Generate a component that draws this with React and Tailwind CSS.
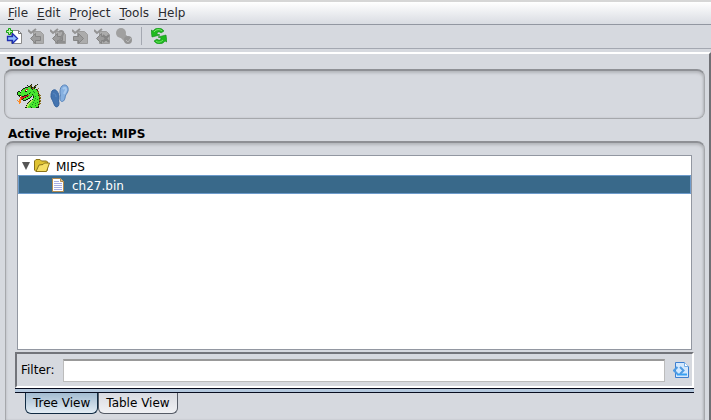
import { useState } from 'react';

const menus = ['File', 'Edit', 'Project', 'Tools', 'Help'];

const ImportIcon = () => (
  <svg width="16" height="16" viewBox="0 0 16 16">
    <path d="M5.5 2.5h7l3 3v10h-10z" fill="#fff" stroke="#8a8a8a" />
    <path d="M12.5 2.5v3h3" fill="none" stroke="#777" />
    <path d="M1.5 8.5h5v-3l5 5-5 5v-3h-5z" fill="#8fbcff" stroke="#1f2fb0" strokeWidth="1.3" />
    <path d="M2.5.5h2v2h2v2h-2v2h-2v-2h-2v-2h2z" fill="#c4f5b0" stroke="#12a012" />
  </svg>
);

const DisabledIcon = ({ kind }) => (
  <svg width="16" height="16" viewBox="0 0 16 16">
    <path d="M5.5 3.5h7l3 3v9h-10z" fill="#acacac" stroke="#9c9c9c" />
    {kind === 'out' ? (
      <path d="M1.5 8.5h5v-3l5 5-5 5v-3h-5z" fill="#9c9c9c" stroke="#858585" />
    ) : (
      <path d="M12.5 8.5h-5v-3l-5 5 5 5v-3h5z" fill="#9c9c9c" stroke="#858585" />
    )}
    {kind === 'undo' && <path d="M9 4c2-2 5-1 4 2L9 14h6" fill="none" stroke="#8e8e8e" strokeWidth="2" />}
    {kind === 'hijack' && <path d="M9 7l6 7M15 7l-6 7" fill="none" stroke="#858585" strokeWidth="2" />}
    <path d="M0 2l3 3 5-4" fill="none" stroke="#949494" strokeWidth="2" />
  </svg>
);

const FindIcon = () => (
  <svg width="16" height="16" viewBox="0 0 16 16">
    <circle cx="5" cy="5" r="5" fill="#a0a0a0" />
    <path d="M6 7l5 5" stroke="#a0a0a0" strokeWidth="6" />
    <circle cx="12" cy="12" r="4" fill="#949494" />
    <path d="M10 12l2 2 3-4" fill="none" stroke="#b8b8b8" />
  </svg>
);

const RefreshIcon = () => (
  <svg width="16" height="16" viewBox="0 0 16 16">
    <path d="M0 2l2 1c3-4 8-4 11 0l-3 2C8 3 6 4 6 6l3 1-8 2z" fill="#1fba1f" stroke="#118a18" strokeWidth=".6" />
    <path d="M16 14l-2-1c-3 4-8 4-11 0l3-2c2 2 4 1 4-1L7 9l8-2z" fill="#1fba1f" stroke="#118a18" strokeWidth=".6" />
    <path d="M3 4c2-3 6-3 8-1M5 13c2 2 5 1 7-1" fill="none" stroke="#7be86b" />
  </svg>
);

const dragonRows = [
  '..............K.....K...',
  '..........K..KB...KB....',
  '...........KKBK..KB.....',
  '........KKKGGBKKBKK.....',
  '......KKGGGGGGKBBK...B..',
  '.....KGGGRRGGGGKGGGKB...',
  '....KGGGRWGGGGGGGGGGK...',
  '.KK.GGGGKKGGGGGGDGGGBB..',
  'KGGKGGGGGGGGGDGGGDGGGB..',
  'KGGGGGGGGGGGKGGGGGGGGK..',
  'KGGGGGGGGGKGGGGKGGGGGBB.',
  '.KKKGGGKKKRRGGGGDGGGGKBB',
  '..KWRKKRRRKGGGK.KGDGGGB.',
  '...RRRRRKGGGGK..KGGGGGBB',
  '...ORRKGGGGKK...GGDGGGKB',
  '..OORKGGGKK....KGGGGDGB.',
  'O.OO..KKK....KLLGDGGGGBB',
  '.OOO........KLLGGGGGGGKB',
  '..OO.......KLLGGDGGGDGB.',
  '..O.......KLLGGGGGDGGGBB',
  '..........LLGGGDGGGGGKB.',
  '.........KLLGGGGGGDGGB..',
  '.........LLGGDGGGGGGGK..',
  '........KKLGGGKGGGGKKK..',
];
const dragonColors = { K: '#10240e', G: '#48e52f', D: '#168a20', L: '#b9e65c', B: '#856e1d', R: '#df2020', W: '#fff', O: '#ff861c' };

const DragonIcon = () => (
  <svg width="24" height="24" viewBox="0 0 24 24" shapeRendering="crispEdges">
    {dragonRows.map((row, y) =>
      [...row].map((c, x) => c !== '.' && <rect key={`${x}-${y}`} x={x} y={y} width="1" height="1" fill={dragonColors[c]} />)
    )}
  </svg>
);

const FootprintsIcon = () => (
  <svg width="20" height="24" viewBox="0 0 20 24">
    <path d="M2 7c3-3 6 0 7 5 0 3-1 4 0 7 0 5-4 5-5 1-1-3-2-4-3-7 0-2 0-4 1-6z" fill="#4474b0" stroke="#34639f" />
    <path d="M12 2c4-3 7 1 6 5-1 3-3 4-3 7-1 5-5 4-5 1 0-2 1-3 0-6 0-3 0-5 2-7z" fill="#86b0e0" stroke="#5985bb" />
    <path d="M13 5c2-2 3-1 3 1l-2 4" fill="none" stroke="#a7c8ed" strokeWidth="2" />
    <path d="M3 10c1-1 3 0 3 3" fill="none" stroke="#5d8bc4" />
  </svg>
);

const FolderIcon = () => (
  <svg width="17" height="16" viewBox="0 0 17 16">
    <path d="M.5 12V3L2 1.5h4L7.5 3h5l1 1v8L12 13.500H2z" fill="#dfc331" stroke="#8a7318" />
    <path d="M2 13.500L5 7l4-.5L10.500 5h5l-3 8.500z" fill="#f5df65" stroke="#8a7318" />
  </svg>
);

const FileIcon = () => (
  <svg width="12" height="14" viewBox="0 0 12 14">
    <path d="M.5.5h8l3 3v10H.5z" fill="#fff" stroke="#b58a4d" />
    <path d="M8.500.5v3h3" fill="#e8c994" stroke="#b58a4d" />
    <path d="M2 3.500h5M2 5.500h8M2 7.500h8M2 9.500h8M2 11.500h8" stroke="#a9aee4" />
  </svg>
);

const FilterIcon = () => (
  <svg width="16" height="16" viewBox="0 0 16 16">
    <path d="M2.500.5h9l4 4v11h-13z" fill="#d3e8fd" stroke="#3d7fd0" />
    <path d="M11.500.5v4h4" fill="#fff" stroke="#72ace5" />
    <path d="M4 12.500h10" stroke="#37a0f2" strokeWidth="2" />
    <path d="M4.500 5L1 8.500 4.500 12M7 5l3.500 3.500L7 12" fill="none" stroke="#4f9be2" strokeWidth="2" />
  </svg>
);

const tools = [
  { name: 'Import', icon: <ImportIcon /> },
  { name: 'Check in', icon: <DisabledIcon kind="in" />, disabled: true },
  { name: 'Undo checkout', icon: <DisabledIcon kind="undo" />, disabled: true },
  { name: 'Check out', icon: <DisabledIcon kind="out" />, disabled: true },
  { name: 'Undo hijack', icon: <DisabledIcon kind="hijack" />, disabled: true },
  { name: 'Find checkouts', icon: <FindIcon />, disabled: true },
];

const inset = 'border border-t-2 border-[#a6a8ac] border-t-[#8e9095] shadow-[inset_0_2px_3px_#b4b6bb,inset_-1px_0_2px_#b9bbc0]';

export default function App() {
  const [view, setView] = useState('Tree View');
  const [filter, setFilter] = useState('');

  return (
    <div className="flex h-screen flex-col overflow-hidden bg-[#d6d9df] font-['DejaVu_Sans',sans-serif] text-xs text-black">
      {/* Menu bar */}
      <nav className="flex h-[25px] shrink-0 items-center gap-[9px] border-t-2 border-b border-t-[#d6d6d6] border-b-[#9297a1] bg-linear-to-b from-white to-[#d9dce2] pl-2 text-[#2b2b2f]">
        {menus.map((menu) => (
          <button key={menu}>
            <span className="underline underline-offset-2">{menu[0]}</span>{menu.slice(1)}
          </button>
        ))}
      </nav>

      {/* Toolbar */}
      <div className="flex h-6 shrink-0 items-center gap-[6px] border-b border-[#a4a8b1] pb-[2px] pl-[6px]">
        {tools.map((tool) => (
          <button key={tool.name} aria-label={tool.name} disabled={tool.disabled}>{tool.icon}</button>
        ))}
        <span className="mx-[3px] h-[18px] w-px bg-[#a4a8b1]" />
        <button aria-label="Refresh"><RefreshIcon /></button>
      </div>

      <main className="mt-[3px] flex min-h-0 flex-1 flex-col border-t-2 border-r-2 border-t-white border-r-[#6f7075] pr-1 pl-1">
        <h2 className="h-[15px] pl-[3px] leading-[17px] font-bold">Tool Chest</h2>
        <section className={`flex h-[50px] shrink-0 items-center gap-[9px] rounded-lg pt-[2px] pl-3 ${inset}`}>
          <button aria-label="CodeBrowser"><DragonIcon /></button>
          <button aria-label="Version Tracking"><FootprintsIcon /></button>
        </section>

        <h2 className="mt-[7px] h-[15px] pl-1 leading-[17px] font-bold">Active Project: MIPS</h2>
        <section className={`ml-px flex min-h-0 flex-1 flex-col rounded-t-lg border-b-0 pt-3 pr-[10px] pl-[9px] ${inset}`}>
          <ul role="tree" className="mx-[2px] min-h-0 flex-1 border border-[#9297a1] bg-white">
            <li role="treeitem" aria-expanded="true" className="flex h-[19px] items-center pl-1">
              <svg width="8" height="8" viewBox="0 0 8 8"><path d="M0 0h8L4 8z" fill="#555" /></svg>
              <span className="ml-1"><FolderIcon /></span>
              <span className="ml-[5px] pt-[2px]">MIPS</span>
            </li>
            <li role="treeitem" aria-selected="true" className="flex h-[19px] items-center gap-2 border border-[#6d9bcb] bg-[#39698a] pl-[33px] text-white">
              <FileIcon />
              <span className="pt-[2px]">ch27.bin</span>
            </li>
          </ul>

          <div className="mt-[2px] flex h-9 shrink-0 items-center border-2 border-[#72747a] border-r-white border-b-white pr-[3px] pl-1">
            <label htmlFor="filter">Filter:</label>
            <input
              id="filter"
              value={filter}
              onChange={(e) => setFilter(e.target.value)}
              className="mx-2 h-[23px] min-w-0 flex-1 border border-t-2 border-[#bcbcbc] border-t-[#999] bg-white px-1 outline-none"
            />
            <button aria-label="Filter options"><FilterIcon /></button>
          </div>

          <div className="h-[5px] shrink-0 border-y border-[#080d20] bg-[#b4c8dd]" />
          <div role="tablist" className="mb-[6px] flex h-[21px] shrink-0 pl-[10px]">
            {['Tree View', 'Table View'].map((tab) => (
              <button
                key={tab}
                role="tab"
                aria-selected={view === tab}
                onClick={() => setView(tab)}
                className={`rounded-b-md border border-t-0 px-[7px] ${view === tab ? 'border-[#102b43] bg-linear-to-b from-[#a3bbd0] to-[#e3edf5]' : 'border-[#555b66] bg-linear-to-b from-[#d9dbe1] to-[#f0f1f4]'}`}
              >
                {tab}
              </button>
            ))}
          </div>
        </section>
      </main>
    </div>
  );
}
